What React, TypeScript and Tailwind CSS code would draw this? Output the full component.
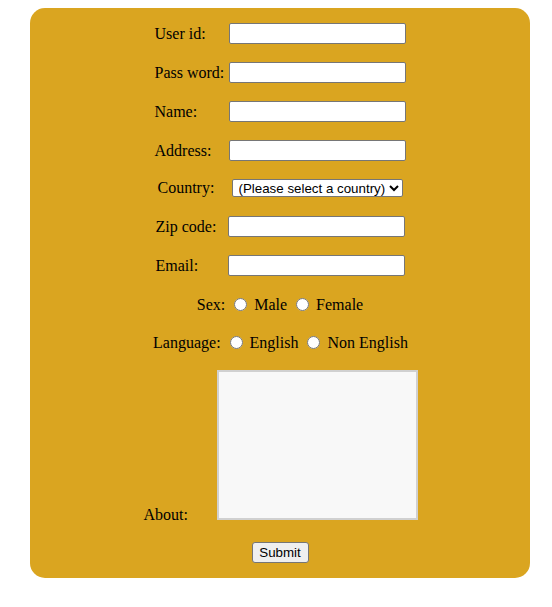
import React from "react";

const inputCls =
  "w-[177px] h-[21px] border border-[#767676] rounded-[2px] bg-white px-[2px] text-[13.33px] font-['Liberation_Sans',Arial,sans-serif] outline-none";

const TextRow = ({ label, labelW = "w-[74px]" }: { label: string; labelW?: string }) => {
  return (
    <div className="flex items-center justify-center h-[21px]">
      <label className={`${labelW} text-left whitespace-nowrap`}>{label}</label>
      <input type="text" className={inputCls} />
    </div>
  );
};

const Radio = ({ name }: { name: string }) => (
  <input type="radio" name={name} className="ml-[5px] mr-[3px] w-[13px] h-[13px] align-[-1px]" />
);

export default function App() {
  return (
    <div className="min-h-[607px] bg-white pt-2">
      <form
        className="ml-[30px] w-[500px] h-[570px] rounded-[15px] bg-[#daa520] pt-[15px] flex flex-col text-black text-[16px] font-['Liberation_Serif','Times_New_Roman',serif]"
        onSubmit={(e) => e.preventDefault()}
      >
        <TextRow label="User id:" />
        <div className="mt-[18px]">
          <TextRow label="Pass word:" />
        </div>
        <div className="mt-[18px]">
          <TextRow label="Name:" />
        </div>
        <div className="mt-[18px]">
          <TextRow label="Address:" />
        </div>
        <div className="mt-[18px] flex items-center justify-center h-[18px]">
          <label className="w-[74px] text-left">Country:</label>
          <select className="w-[171px] h-[18px] border border-[#767676] rounded-[2px] bg-white pl-[2px] text-[13.33px] font-['Liberation_Sans',Arial,sans-serif]">
            <option>(Please select a country)</option>
            <option>India</option>
            <option>USA</option>
            <option>UK</option>
          </select>
        </div>
        <div className="mt-[19px]">
          <TextRow label="Zip code:" labelW="w-[72px]" />
        </div>
        <div className="mt-[18px]">
          <TextRow label="Email:" labelW="w-[72px]" />
        </div>
        <div className="mt-[18px] h-[21px] leading-[21px] text-center">
          Sex: <Radio name="sex" /> Male <Radio name="sex" /> Female
        </div>
        <div className="mt-[17px] h-[21px] leading-[21px] text-center pl-[1px]">
          Language: <Radio name="lang" /> English <Radio name="lang" /> Non English
        </div>
        <div className="mt-[17px] flex items-end justify-center">
          <label className="w-[74px] text-left leading-[18px] mb-[-4px] pl-[1px]">About:</label>
          <textarea className="w-[201px] h-[150px] border-2 border-[#d0d0d0] bg-[#f8f8f8] resize-none outline-none"></textarea>
        </div>
        <div className="mt-[22px] flex justify-center">
          <button
            type="submit"
            className="h-[21px] w-[57px] border border-[#767676] rounded-[3px] bg-[#efefef] text-[13.33px] leading-[15px] font-['Liberation_Sans',Arial,sans-serif]"
          >
            Submit
          </button>
        </div>
      </form>
    </div>
  );
}
